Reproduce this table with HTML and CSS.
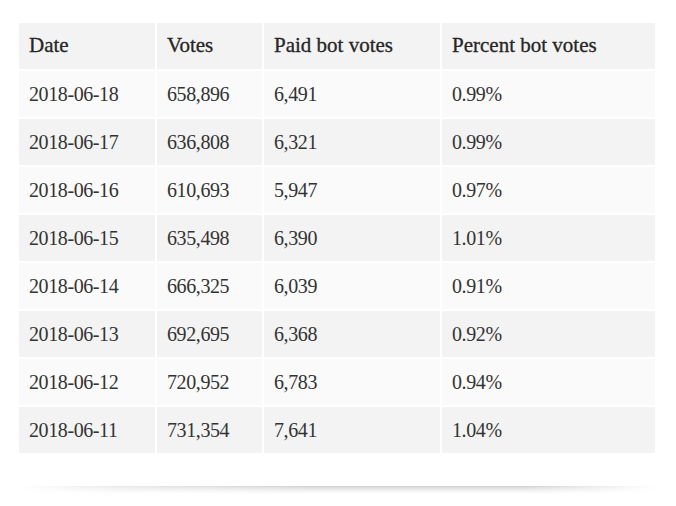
FILE: index.html
```html
<!DOCTYPE html>
<html>
<head>
<meta charset="utf-8">
<link rel="stylesheet" href="styles.css">
</head>
<body>
<div class="card">
  <table class="data">
    <colgroup>
      <col class="c1"><col class="c2"><col class="c3"><col class="c4">
    </colgroup>
    <thead>
      <tr><th>Date</th><th>Votes</th><th>Paid bot votes</th><th>Percent bot votes</th></tr>
    </thead>
    <tbody>
      <tr><td>2018-06-18</td><td>658,896</td><td>6,491</td><td>0.99%</td></tr>
      <tr><td>2018-06-17</td><td>636,808</td><td>6,321</td><td>0.99%</td></tr>
      <tr><td>2018-06-16</td><td>610,693</td><td>5,947</td><td>0.97%</td></tr>
      <tr><td>2018-06-15</td><td>635,498</td><td>6,390</td><td>1.01%</td></tr>
      <tr><td>2018-06-14</td><td>666,325</td><td>6,039</td><td>0.91%</td></tr>
      <tr><td>2018-06-13</td><td>692,695</td><td>6,368</td><td>0.92%</td></tr>
      <tr><td>2018-06-12</td><td>720,952</td><td>6,783</td><td>0.94%</td></tr>
      <tr><td>2018-06-11</td><td>731,354</td><td>7,641</td><td>1.04%</td></tr>
    </tbody>
  </table>
  <div class="shadow"></div>
</div>
</body>
</html>
```
FILE: styles.css
```css
html, body {
  margin: 0;
  padding: 0;
  background: #ffffff;
}
.card {
  padding: 21px 17px 0 17px;
  font-family: "Liberation Serif", "Times New Roman", serif;
  color: #333333;
}
.data {
  border-collapse: separate;
  border-spacing: 2px;
  width: 640px;
  table-layout: fixed;
  font-size: 20px;
}
.c1 { width: 136px; }
.c2 { width: 105px; }
.c3 { width: 176px; }
.c4 { width: 213px; }
.data th,
.data td {
  height: 46px;
  padding: 0 10px;
  box-sizing: border-box;
  text-align: left;
  vertical-align: middle;
  white-space: nowrap;
}
.data td {
  letter-spacing: -0.4px;
}
.data th {
  padding-bottom: 2px;
  font-size: 21px;
  font-weight: normal;
  color: #262626;
  background: #f3f3f3;
  -webkit-text-stroke: 0.3px #262626;
}
.data tbody tr:nth-child(odd) td {
  background: #fafafa;
}
.data tbody tr:nth-child(even) td {
  background: #f3f3f3;
}
.shadow {
  margin: 31px 2px 0 2px;
  height: 8px;
  background: linear-gradient(to bottom, #d2d2d2 0%, #e8e8e8 35%, #f8f8f8 75%, #ffffff 100%);
  -webkit-mask-image: linear-gradient(to right, transparent 0%, rgba(0,0,0,0.5) 15%, #000 45%, #000 80%, transparent 100%);
  mask-image: linear-gradient(to right, transparent 0%, rgba(0,0,0,0.5) 15%, #000 45%, #000 80%, transparent 100%);
}
```
